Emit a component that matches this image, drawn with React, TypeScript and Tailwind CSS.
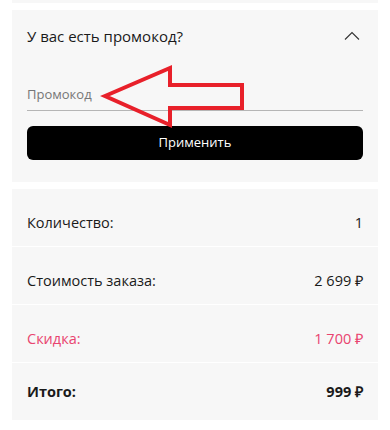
const rows = [
  { label: "Количество:", value: "1", tone: "text-[#1a1a1a]" },
  { label: "Стоимость заказа:", value: "2 699 ₽", tone: "text-[#1a1a1a]" },
  { label: "Скидка:", value: "1 700 ₽", tone: "text-[#e9446f]" },
];

const App = () => {
  return (
    <div className="relative w-[390px] h-[430px] bg-white font-['Open_Sans','Liberation_Sans',sans-serif] overflow-hidden">
      <div className="mx-3 h-[3px] bg-[#f7f7f7]" />

      {/* promo block */}
      <div className="mx-3 mt-[7px] bg-[#f7f7f7] px-[15px] pt-[6px] pb-[22px]">
        <div className="flex items-center justify-between h-[40px]">
          <span className="text-[15px] text-[#1a1a1a]">У вас есть промокод?</span>
          <svg width="16" height="10" viewBox="0 0 16 10" className="mr-[3px]">
            <polyline points="1,8.5 8,1.5 15,8.5" fill="none" stroke="#333" strokeWidth="1.1" />
          </svg>
        </div>
        <div className="mt-[21px] h-[34px] border-b border-[#b5b5b5] flex items-center">
          <span className="text-[13px] text-[#767676] pt-[2px]">Промокод</span>
        </div>
        <button className="mt-[15px] w-full h-[34px] rounded-[6px] bg-black text-white text-[13px]">
          Применить
        </button>
      </div>

      {/* summary */}
      <div className="mx-3 mt-[7px] bg-[#f7f7f7]">
        {rows.map((row) => (
          <div
            key={row.label}
            className={`flex justify-between px-[15px] pt-[24px] pb-[13px] border-b border-white text-[14.5px] leading-[20px] ${row.tone}`}
          >
            <span>{row.label}</span>
            <span>{row.value}</span>
          </div>
        ))}
        <div className="flex justify-between px-[15px] pt-[19px] pb-[18px] text-[14.5px] leading-[20px] font-bold text-[#1a1a1a]">
          <span>Итого:</span>
          <span>999 ₽</span>
        </div>
      </div>

      {/* red annotation arrow */}
      <svg className="absolute left-0 top-0 pointer-events-none" width="390" height="430">
        <polygon
          points="105,96 170,68 170,85 242,85 242,108 170,108 170,125"
          fill="none"
          stroke="#e8202a"
          strokeWidth="4"
          strokeLinejoin="miter"
        />
      </svg>
    </div>
  );
};

export default App;
